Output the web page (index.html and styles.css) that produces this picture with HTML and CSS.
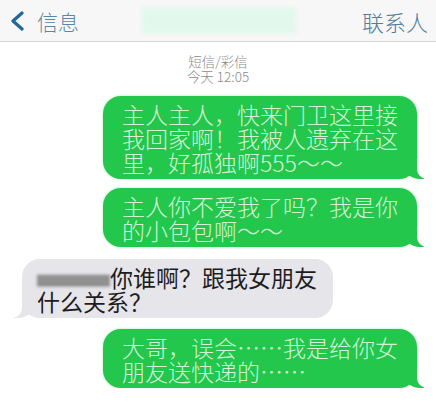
FILE: index.html
```html
<!DOCTYPE html>
<html>
<head>
    <title>信息</title>
    <link rel="stylesheet" href="styles.css">
</head>
<body>

    <div class="header">
        <div class="back">
            <svg class="chevron" width="16" height="20" viewBox="0 0 16 20">
                <path d="M13 2 L4 10 L13 18" fill="none" stroke="#22679c" stroke-width="3.2" stroke-linecap="round" stroke-linejoin="round"/>
            </svg>
            <span>信息</span>
        </div>
        <div class="title"><div class="title-blur"></div></div>
        <div class="contact">联系人</div>
    </div>

    <div class="meta">
        <div>短信/彩信</div>
        <div>今天 12:05</div>
    </div>

    <div class="thread">
        <div class="bubble out">主人主人，快来门卫这里接<br>我回家啊！我被人遗弃在这<br>里，好孤独啊555～～</div>
        <div class="bubble out">主人你不爱我了吗？我是你<br>的小包包啊～～</div>
        <div class="bubble in"><span class="hidden-name"></span>你谁啊？跟我女朋友<br>什么关系？</div>
        <div class="bubble out">大哥，误会……我是给你女<br>朋友送快递的……</div>
    </div>

</body>
</html>
```

FILE: styles.css
```css
body {
    margin: 0;
    background: #fff;
    font-family: "Noto Sans CJK SC", "Liberation Sans", sans-serif;
}

.header {
    height: 41px;
    border-bottom: 1px solid #d4d4d4;
    background: #f7f7f7;
    display: grid;
    grid-template-columns: 1fr auto 1fr;
    align-items: center;
    padding: 0 8px 0 9px;
    font-weight: 300;
}

.back {
    display: flex;
    align-items: center;
    gap: 12px;
    color: #5a86a8;
    font-size: 21px;
}

.chevron {
    display: block;
}

.title {
    width: 160px;
    height: 30px;
    display: flex;
    align-items: center;
    justify-content: center;
}

.title-blur {
    width: 154px;
    height: 27px;
    background: #e2f8ec;
    filter: blur(2px);
}

.contact {
    justify-self: end;
    color: #4e7f9f;
    font-size: 22px;
}

.meta {
    margin-top: 12px;
    text-align: center;
    color: #8a8a8a;
    font-size: 13.5px;
    line-height: 15px;
    font-weight: 300;
}

.thread {
    display: flex;
    flex-direction: column;
    margin-top: 12px;
}

.bubble {
    position: relative;
    font-size: 23px;
    line-height: 24px;
    padding: 6px 19px 5px;
    border-radius: 18px;
    white-space: nowrap;
}

.bubble.out {
    align-self: flex-end;
    width: 276px;
    margin-right: 19px;
    background: #22c74b;
    color: #d4f4da;
    font-weight: 300;
    box-shadow: 0 0 3px rgba(110, 220, 140, 0.6);
}

.bubble.in {
    align-self: flex-start;
    margin-left: 22px;
    padding: 6px 16px 5px 15px;
    background: #e6e5ea;
    color: #1d1d1d;
}

.bubble + .bubble { margin-top: 9px; }
.bubble.in { margin-top: 12px; }
.bubble.in + .bubble { margin-top: 11px; }

.bubble::before,
.bubble::after {
    content: "";
    position: absolute;
    bottom: 0;
    height: 20px;
}

.bubble.out::before {
    right: -7px;
    width: 20px;
    background: #22c74b;
    border-bottom-left-radius: 16px 14px;
}

.bubble.out::after {
    right: -26px;
    width: 26px;
    background: #fff;
    border-bottom-left-radius: 10px;
}

.bubble.in::before {
    left: -8px;
    width: 20px;
    background: #e6e5ea;
    border-bottom-right-radius: 16px 14px;
}

.bubble.in::after {
    left: -26px;
    width: 26px;
    background: #fff;
    border-bottom-right-radius: 10px;
}

.hidden-name {
    display: inline-block;
    width: 73px;
    height: 12px;
    vertical-align: middle;
    background: repeating-linear-gradient(180deg, #777 0 2px, #aaa 2px 4px);
    filter: blur(1.5px);
}
```
